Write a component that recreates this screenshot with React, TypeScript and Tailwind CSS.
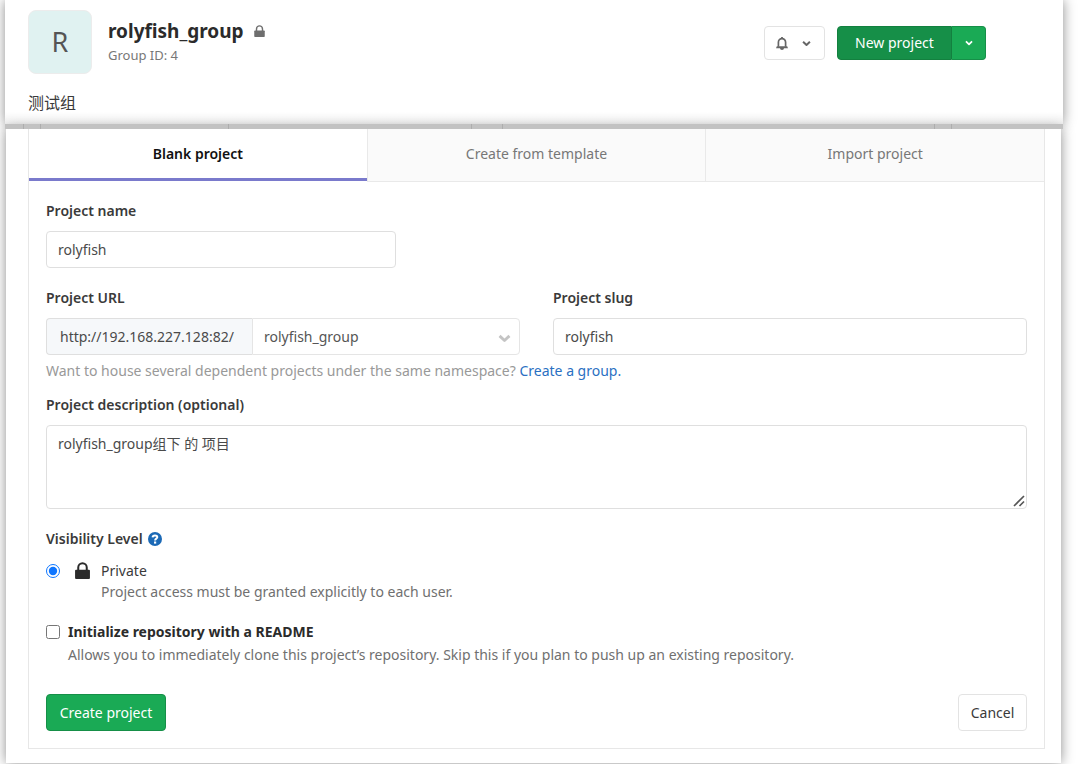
import React from 'react';

function Chevron({ className }: { className: string }) {
  return (
    <svg viewBox="0 0 10 10" className={className} fill="none" stroke="currentColor" strokeWidth="2.2" aria-hidden="true">
      <path d="M1.2 3 L5 6.6 L8.8 3" strokeLinejoin="round" />
    </svg>
  );
}

function Lock({ className }: { className: string }) {
  return (
    <svg viewBox="0 0 14 16" className={className} aria-hidden="true">
      <path d="M3 8V5.2a4 4 0 0 1 8 0V8" fill="none" stroke="currentColor" strokeWidth="1.9" />
      <rect x="0" y="7.2" width="14" height="8.8" rx="1" fill="currentColor" />
    </svg>
  );
}

function Bell() {
  return (
    <svg viewBox="0 0 12 13" className="h-[13px] w-3" aria-hidden="true">
      <path d="M2.4 9.8V5.2a3.6 3.6 0 0 1 7.2 0v4.6" fill="none" stroke="currentColor" strokeWidth="1.7" />
      <path d="M0.8 9.2h10.4L12 11.2H0z" fill="currentColor" />
      <path d="M4 11h4a2 2 0 0 1-4 0z" fill="currentColor" />
      <path d="M5.1 0h1.8v2H5.1z" fill="currentColor" />
    </svg>
  );
}

const label = 'block text-sm leading-5 font-semibold text-[#3a3a3a]';
const field = 'h-[37px] rounded border border-[#dfdfdf] bg-white px-[11px] text-sm text-[#4a4a4a]';

export default function App() {
  return (
    <div className="overflow-hidden bg-white font-['Noto_Sans','Noto_Sans_CJK_SC',sans-serif] text-sm text-[#3a3a3a]">
      <div className="bg-white pb-px">
        <header className="relative mr-[21px] ml-[5px] bg-linear-to-b from-white from-90% to-[#f2f2f2] pr-[77px] pb-[10px] pl-[23px] pt-[10px] shadow-[0_0_12px_rgba(0,0,0,0.45)]">
          <div className="flex items-start">
            <div className="flex size-[64px] shrink-0 items-center justify-center rounded-lg border border-[#ececec] bg-[#e0f2f1] text-[27px] text-[#555]">
              R
            </div>
            <div className="ml-4 grow pt-[7px]">
              <div className="flex items-center gap-[10px]">
                <h1 className="text-[19px] leading-7 font-bold text-[#2b2b2b]">rolyfish_group</h1>
                <Lock className="h-3 w-[11px] text-[#6e6e6e]" />
              </div>
              <p className="text-[13px] leading-5 text-[#777]">Group ID: 4</p>
            </div>
            <div className="flex gap-3 pt-4">
              <button type="button" aria-label="Notification settings" className="flex h-[34px] w-[61px] items-center justify-center gap-[14px] rounded border border-[#e3e3e3] bg-white pr-[2px] text-[#666]">
                <Bell />
                <Chevron className="size-[9px]" />
              </button>
              <div className="flex h-[34px] text-white">
                <button type="button" className="w-[115px] rounded-l border border-[#13803f] bg-[#168f48] text-sm">New project</button>
                <button type="button" aria-label="More options" className="flex w-[34px] items-center justify-center rounded-r border border-l-0 border-[#168f48] bg-[#1aaa55]">
                  <Chevron className="size-2" />
                </button>
              </div>
            </div>
          </div>
          <p className="mt-[18px] text-base leading-[22px]">测试组</p>
        </header>

        <div className="relative z-10 mr-[21px] ml-[5px] grid h-[5px] grid-cols-[19fr_17fr_188fr_243fr_31fr_432fr_17fr_111fr] bg-[#c2c2c2]" aria-hidden="true">
          <span className="border-r border-[#adadad]" />
          <span className="border-r border-[#adadad]" />
          <span className="border-r border-[#adadad]" />
          <span className="border-r border-[#adadad]" />
          <span className="border-r border-[#adadad]" />
          <span className="border-r border-[#adadad]" />
          <span className="border-r border-[#adadad]" />
        </div>

        <main className="relative mr-[23px] ml-[6px] bg-white pr-[16px] pb-[14px] pl-[22px] shadow-[0_0_12px_rgba(0,0,0,0.45)]">
          <div className="border-x border-b border-[#e7e7e7]">
            <div role="tablist" className="flex">
              <button type="button" role="tab" aria-selected="true" className="h-[52px] flex-1 border-b-[3px] border-[#7a7acc] font-semibold text-[#111]">
                Blank project
              </button>
              <button type="button" role="tab" aria-selected="false" className="h-[53px] flex-1 border-x border-b border-[#e9e9e9] bg-[#fafafa] pb-[3px] text-[#777]">
                Create from template
              </button>
              <button type="button" role="tab" aria-selected="false" className="h-[53px] flex-1 border-b border-[#e9e9e9] bg-[#fafafa] pb-[3px] text-[#777]">
                Import project
              </button>
            </div>

            <form className="px-[17px] pt-[19px] pb-[17px]" onSubmit={(e: React.FormEvent) => e.preventDefault()}>
              <label htmlFor="name" className={label}>Project name</label>
              <input id="name" defaultValue="rolyfish" className={`${field} mt-[10px] w-[350px]`} />

              <div className="mt-5 flex gap-[33px]">
                <div className="flex-1">
                  <label htmlFor="namespace" className={label}>Project URL</label>
                  <div className="mt-[10px] flex">
                    <span className="flex h-[37px] w-[206px] items-center rounded-l border border-r-0 border-[#dfdfdf] bg-[#f6f8fa] px-[13px] text-sm text-[#4a4a4a]">
                      http://192.168.227.128:82/
                    </span>
                    <div className="relative grow">
                      <select id="namespace" className="h-[37px] w-full appearance-none rounded-r border border-[#e5e5e5] bg-white px-[11px] text-sm text-[#555]">
                        <option>rolyfish_group</option>
                      </select>
                      <Chevron className="pointer-events-none absolute top-[14px] right-[9px] size-[13px] text-[#c4c4c4]" />
                    </div>
                  </div>
                </div>
                <div className="flex-1">
                  <label htmlFor="slug" className={label}>Project slug</label>
                  <input id="slug" defaultValue="rolyfish" className={`${field} mt-[10px] w-full`} />
                </div>
              </div>
              <p className="mt-[6px] leading-5 text-[#999]">
                Want to house several dependent projects under the same namespace?{' '}
                <a href="#group" className="text-[#2a70c2]">Create a group.</a>
              </p>

              <label htmlFor="description" className={`${label} mt-[14px]`}>Project description (optional)</label>
              <div className="relative mt-[10px]">
                <textarea
                  id="description"
                  defaultValue="rolyfish_group组下 的 项目"
                  className="block h-[84px] w-full resize-none rounded border border-[#dfdfdf] bg-white px-[11px] py-2 text-sm leading-5 text-[#4a4a4a]"
                />
                <svg viewBox="0 0 12 12" className="pointer-events-none absolute right-[2px] bottom-[2px] size-3" stroke="#555" strokeWidth="1.7" aria-hidden="true">
                  <path d="M1 11L11 1M6.5 11L11 6.5" />
                </svg>
              </div>

              <fieldset className="mt-5">
                <legend className="flex items-center gap-[5px] leading-5 font-semibold">
                  Visibility Level
                  <a href="#visibility" aria-label="Visibility help">
                    <svg viewBox="0 0 14 14" className="size-[14px]" aria-hidden="true">
                      <circle cx="7" cy="7" r="7" fill="#1b69b6" />
                      <path d="M4.6 5.4C4.7 2.9 9.4 2.8 9.3 5.3C9.2 6.8 7.1 6.6 7.1 8.5" fill="none" stroke="#fff" strokeWidth="2" />
                      <rect x="6" y="9.5" width="2.2" height="2.1" fill="#fff" />
                    </svg>
                  </a>
                </legend>
                <div className="mt-3 flex">
                  <input id="private" type="radio" name="visibility" defaultChecked aria-describedby="private-note" className="mt-[3px] size-[14px] accent-[#0d75ff]" />
                  <Lock className="mt-px ml-[15px] h-[17px] w-[15px] text-[#2b2b2b]" />
                  <div className="ml-[11px]">
                    <label htmlFor="private" className="block leading-5">Private</label>
                    <p id="private-note" className="mt-px leading-5 text-[#707070]">Project access must be granted explicitly to each user.</p>
                  </div>
                </div>
              </fieldset>

              <div className="mt-5 flex gap-2">
                <input id="readme" type="checkbox" aria-describedby="readme-note" className="mt-[3px] size-[14px]" />
                <div>
                  <label htmlFor="readme" className="block leading-5 font-bold text-[#2b2b2b]">Initialize repository with a README</label>
                  <p id="readme-note" className="mt-[3px] leading-5 text-[#707070]">
                    Allows you to immediately clone this project’s repository. Skip this if you plan to push up an existing repository.
                  </p>
                </div>
              </div>

              <div className="mt-[29px] flex justify-between">
                <button type="submit" className="h-[37px] w-[120px] rounded border border-[#168f48] bg-[#1aaa55] text-white">Create project</button>
                <button type="button" className="h-[37px] w-[69px] rounded border border-[#e3e3e3] bg-white">Cancel</button>
              </div>
            </form>
          </div>
        </main>
      </div>
    </div>
  );
}
